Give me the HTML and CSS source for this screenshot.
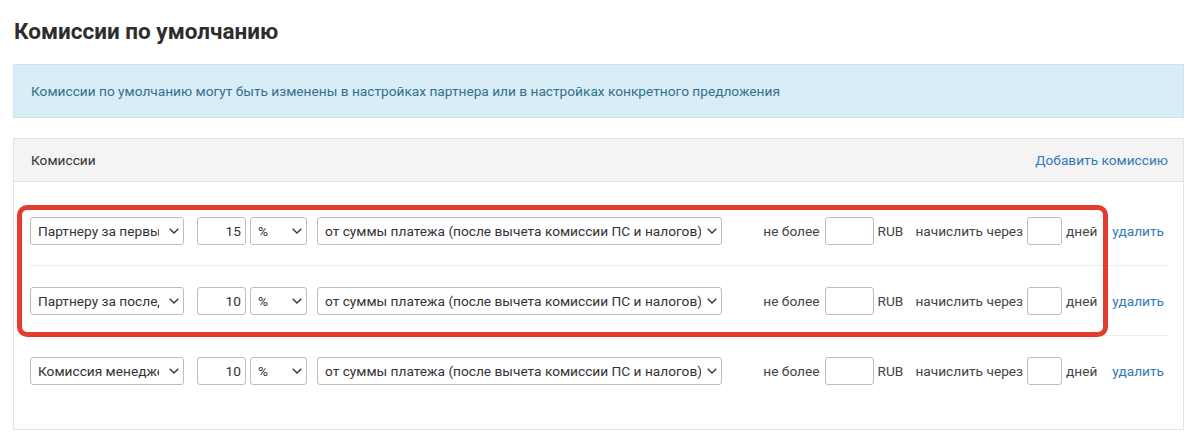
FILE: index.html
```html
<!DOCTYPE html>
<html lang="ru">
<head>
<meta charset="utf-8">
<title>Комиссии по умолчанию</title>
<link rel="stylesheet" href="styles.css">
</head>
<body>
<div class="page">
  <h1 class="title">Комиссии по умолчанию</h1>
  <div class="alert">Комиссии по умолчанию могут быть изменены в настройках партнера или в настройках конкретного предложения</div>
  <div class="panel">
    <div class="panel-heading">
      <span>Комиссии</span>
      <a class="link" href="#">Добавить комиссию</a>
    </div>
    <div class="panel-body">
      <div class="row">
        <div class="select sel-type"><span class="sel-text">Партнеру за первый платеж</span><svg class="chev" width="10" height="6" viewBox="0 0 10 6"><polyline points="0.7,0.7 5,5 9.3,0.7"/></svg></div>
        <div class="input num">15</div>
        <div class="select sel-unit"><span class="sel-text">%</span><svg class="chev" width="10" height="6" viewBox="0 0 10 6"><polyline points="0.7,0.7 5,5 9.3,0.7"/></svg></div>
        <div class="select sel-base"><span class="sel-text">от суммы платежа (после вычета комиссии ПС и налогов)</span><svg class="chev" width="10" height="6" viewBox="0 0 10 6"><polyline points="0.7,0.7 5,5 9.3,0.7"/></svg></div>
        <div class="extra">
          <span class="lbl">не более</span>
          <div class="input limit"></div>
          <span class="lbl cur">RUB</span>
          <span class="lbl">начислить через</span>
          <div class="input days"></div>
          <span class="lbl">дней</span>
          <a class="link del" href="#">удалить</a>
        </div>
      </div>
      <div class="row">
        <div class="select sel-type"><span class="sel-text">Партнеру за последующие платежи</span><svg class="chev" width="10" height="6" viewBox="0 0 10 6"><polyline points="0.7,0.7 5,5 9.3,0.7"/></svg></div>
        <div class="input num">10</div>
        <div class="select sel-unit"><span class="sel-text">%</span><svg class="chev" width="10" height="6" viewBox="0 0 10 6"><polyline points="0.7,0.7 5,5 9.3,0.7"/></svg></div>
        <div class="select sel-base"><span class="sel-text">от суммы платежа (после вычета комиссии ПС и налогов)</span><svg class="chev" width="10" height="6" viewBox="0 0 10 6"><polyline points="0.7,0.7 5,5 9.3,0.7"/></svg></div>
        <div class="extra">
          <span class="lbl">не более</span>
          <div class="input limit"></div>
          <span class="lbl cur">RUB</span>
          <span class="lbl">начислить через</span>
          <div class="input days"></div>
          <span class="lbl">дней</span>
          <a class="link del" href="#">удалить</a>
        </div>
      </div>
      <div class="row">
        <div class="select sel-type"><span class="sel-text">Комиссия менеджера</span><svg class="chev" width="10" height="6" viewBox="0 0 10 6"><polyline points="0.7,0.7 5,5 9.3,0.7"/></svg></div>
        <div class="input num">10</div>
        <div class="select sel-unit"><span class="sel-text">%</span><svg class="chev" width="10" height="6" viewBox="0 0 10 6"><polyline points="0.7,0.7 5,5 9.3,0.7"/></svg></div>
        <div class="select sel-base"><span class="sel-text">от суммы платежа (после вычета комиссии ПС и налогов)</span><svg class="chev" width="10" height="6" viewBox="0 0 10 6"><polyline points="0.7,0.7 5,5 9.3,0.7"/></svg></div>
        <div class="extra">
          <span class="lbl">не более</span>
          <div class="input limit"></div>
          <span class="lbl cur">RUB</span>
          <span class="lbl">начислить через</span>
          <div class="input days"></div>
          <span class="lbl">дней</span>
          <a class="link del" href="#">удалить</a>
        </div>
      </div>
    </div>
  </div>
  <div class="highlight"></div>
</div>
</body>
</html>
```

FILE: styles.css
```css
* { box-sizing: border-box; }
html, body { margin: 0; padding: 0; background: #fff; }
body {
  font-family: Roboto, "Liberation Sans", sans-serif;
  font-size: 13.7px;
  color: #333;
  width: 1200px;
  height: 445px;
  overflow: hidden;
}
.page {
  position: relative;
  padding: 18px 16px 0 13px;
}
.title {
  margin: 0 0 0 1px;
  font-size: 22.5px;
  line-height: 26px;
  font-weight: 700;
  color: #2d2d2d;
}
.alert {
  margin-top: 20px;
  padding: 16px 17px;
  line-height: 20px;
  background: #d9edf7;
  border: 1px solid #c7e6f3;
  color: #31708f;
}
.panel {
  margin-top: 20px;
  border: 1px solid #e3e3e3;
}
.panel-heading {
  display: flex;
  justify-content: space-between;
  align-items: center;
  padding: 11px 15px 11px 17px;
  line-height: 20px;
  background: #f4f4f4;
  border-bottom: 1px solid #e3e3e3;
}
.link {
  color: #337ab7;
  text-decoration: none;
}
.panel-body {
  padding: 14px 15px 24px 16px;
}
.row {
  display: flex;
  align-items: center;
  padding: 21px 0 20px;
  border-bottom: 1px solid #ececec;
}
.row:last-child { border-bottom: 0; }
.select, .input {
  height: 28px;
  border: 1px solid #bdbdbd;
  border-radius: 3px;
  background: #fff;
  flex: none;
}
.select {
  display: flex;
  align-items: center;
  padding: 0 4px 0 7px;
  line-height: 26px;
}
.sel-text {
  flex: 1;
  overflow: hidden;
  white-space: nowrap;
  min-width: 0;
}
.chev {
  flex: none;
  margin-left: 6px;
}
.chev polyline {
  fill: none;
  stroke: #333;
  stroke-width: 1.3;
}
.sel-type { width: 154px; margin-right: 13px; }
.sel-type .sel-text { margin-right: 4px; }
.num {
  width: 49px;
  margin-right: 4px;
  text-align: right;
  padding: 0 4px;
  line-height: 26px;
}
.sel-unit { width: 57px; margin-right: 10px; }
.sel-base { width: 405px; }
.extra {
  margin-left: auto;
  display: flex;
  align-items: center;
  gap: 0;
  padding-right: 4px;
}
.lbl { color: #444; white-space: nowrap; }
.limit { width: 49px; margin: 0 4px 0 5px; }
.cur { margin-right: 12px; }
.days { width: 35px; margin: 0 4px; }
.del { margin-left: 15px; white-space: nowrap; }
.highlight {
  position: absolute;
  left: 17px;
  top: 205px;
  width: 1091px;
  height: 132px;
  border: 5px solid #e53b2f;
  border-radius: 10px;
  pointer-events: none;
}
```
